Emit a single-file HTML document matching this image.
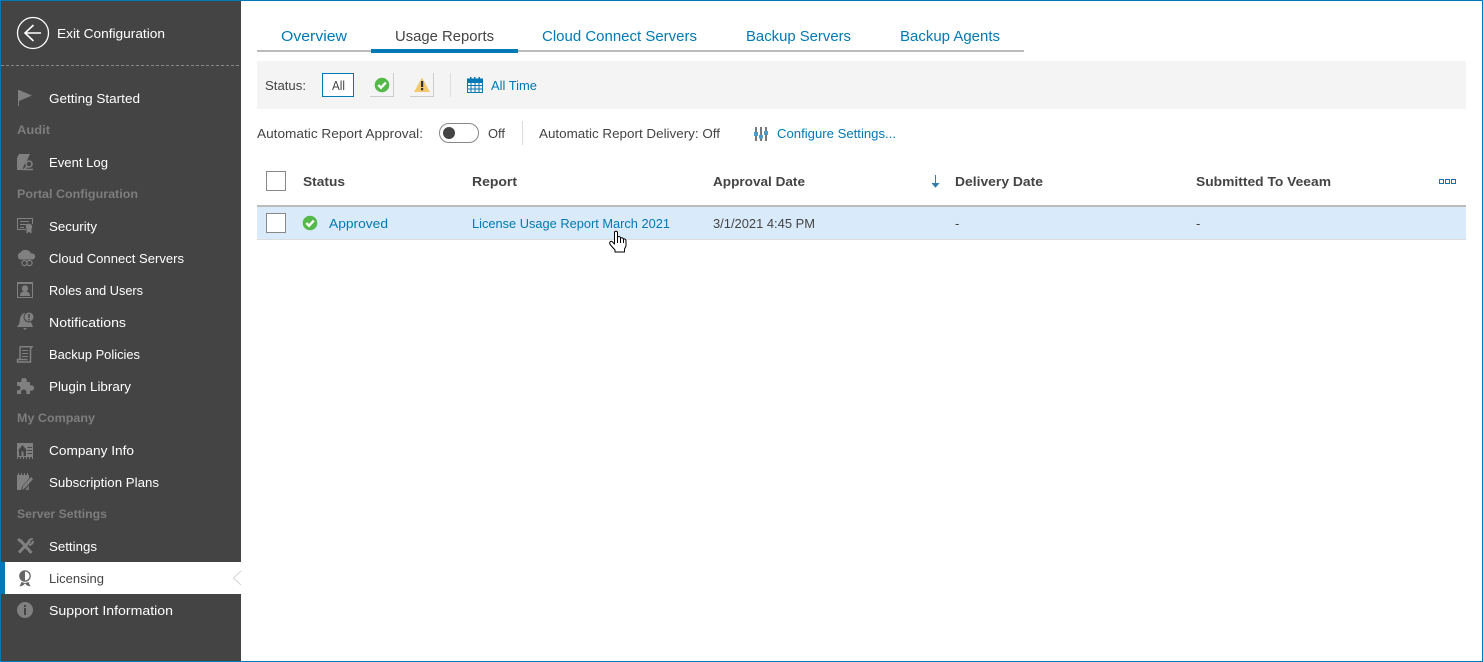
<!DOCTYPE html>
<html><head><meta charset="utf-8"><title>Usage Reports</title>
<style>
html,body{margin:0;padding:0;background:#fff;width:1483px;height:662px;overflow:hidden}
svg{display:block;position:absolute;left:0;top:0}
text{font-family:"Liberation Sans",sans-serif;font-size:13px;fill:#444}
.n{fill:#fff}
.h{font-weight:bold;font-size:12px;fill:#7d7d7d}
.t{font-size:15px;fill:#0079b4}
.l{fill:#0079b4}
.b{font-weight:bold;fill:#444}
.i{fill:#808080}
</style></head><body>
<svg width="1483" height="662" viewBox="0 0 1483 662">
<rect width="1483" height="662" fill="#fff"/>
<!-- sidebar -->
<rect x="1" y="1" width="240" height="660" fill="#444"/>
<line x1="1" y1="65.5" x2="241" y2="65.5" stroke="#8a8a8a" stroke-dasharray="3 2"/>
<rect x="1" y="562" width="4" height="32" fill="#0079b4"/>
<rect x="5" y="562" width="236" height="32" fill="#fff"/>
<path d="M241 571L233.500 578L241 585" fill="none" stroke="#d4d4d4"/>
<!-- frame -->
<rect x="0.500" y="0.500" width="1482" height="661" fill="none" stroke="#0079b4"/>
<!-- exit -->
<circle cx="33" cy="33" r="15.500" fill="none" stroke="#fff" stroke-width="1.300"/>
<path d="M41 33H25M33.500 25L25 33L33.500 41" fill="none" stroke="#fff" stroke-width="1.600"/>
<text class="n" x="57" y="38" textLength="108" lengthAdjust="spacingAndGlyphs">Exit Configuration</text>
<!-- nav text -->
<text class="n" x="49" y="103" textLength="91" lengthAdjust="spacingAndGlyphs">Getting Started</text>
<text class="h" x="17" y="134" textLength="33" lengthAdjust="spacingAndGlyphs">Audit</text>
<text class="n" x="49" y="167" textLength="59" lengthAdjust="spacingAndGlyphs">Event Log</text>
<text class="h" x="17" y="198" textLength="121" lengthAdjust="spacingAndGlyphs">Portal Configuration</text>
<text class="n" x="49" y="231" textLength="48" lengthAdjust="spacingAndGlyphs">Security</text>
<text class="n" x="49" y="263" textLength="135" lengthAdjust="spacingAndGlyphs">Cloud Connect Servers</text>
<text class="n" x="49" y="295" textLength="94" lengthAdjust="spacingAndGlyphs">Roles and Users</text>
<text class="n" x="49" y="327" textLength="77" lengthAdjust="spacingAndGlyphs">Notifications</text>
<text class="n" x="49" y="359" textLength="91" lengthAdjust="spacingAndGlyphs">Backup Policies</text>
<text class="n" x="49" y="391" textLength="82" lengthAdjust="spacingAndGlyphs">Plugin Library</text>
<text class="h" x="17" y="422" textLength="78" lengthAdjust="spacingAndGlyphs">My Company</text>
<text class="n" x="49" y="455" textLength="85" lengthAdjust="spacingAndGlyphs">Company Info</text>
<text class="n" x="49" y="487" textLength="110" lengthAdjust="spacingAndGlyphs">Subscription Plans</text>
<text class="h" x="17" y="518" textLength="90" lengthAdjust="spacingAndGlyphs">Server Settings</text>
<text class="n" x="49" y="551" textLength="48" lengthAdjust="spacingAndGlyphs">Settings</text>
<text x="49" y="583" textLength="55" lengthAdjust="spacingAndGlyphs">Licensing</text>
<text class="n" x="49" y="615" textLength="124" lengthAdjust="spacingAndGlyphs">Support Information</text>
<!-- nav icons -->
<path class="i" d="M18 90H19V106H18ZM19 90L32 95.500L19 101Z"/>
<!-- event log -->
<path class="i" d="M19 154H30L27.500 159.500L24 165L22.500 170H17V158Z"/>
<circle cx="29" cy="164" r="3" fill="none" stroke="#808080" stroke-width="1.600"/>
<path d="M27 166.500L24 169.500H33" fill="none" stroke="#808080" stroke-width="1.600"/>
<!-- security -->
<path d="M26 229.500H17.500V218.500H32.500V224" fill="none" stroke="#808080"/>
<path class="i" d="M20 221H29V222H20ZM20 224H27V225H20ZM20 227H24V228H20Z"/>
<circle class="i" cx="29" cy="227" r="3.200"/><path class="i" d="M26.500 229H31.500V233.500L29 232L26.500 233.500Z"/>
<!-- cloud -->
<path class="i" d="M20 259.500A3.800 3.800 0 0 1 20.500 252.500A6 6 0 0 1 31 253.500A3 3 0 0 1 33 259.500Z"/>
<circle cx="24.500" cy="263" r="2.600" fill="none" stroke="#808080" stroke-width="1.200"/>
<circle cx="29.500" cy="263" r="2.600" fill="none" stroke="#808080" stroke-width="1.200"/>
<!-- roles -->
<rect x="17.500" y="282.500" width="15" height="15" fill="none" stroke="#808080"/>
<rect class="i" x="17" y="282" width="16" height="2"/>
<circle class="i" cx="25" cy="288.500" r="3.200"/><path class="i" d="M20 296C20 292.500 22 291.500 25 291.500C28 291.500 30 292.500 30 296Z"/>
<!-- notifications -->
<path class="i" d="M24 313A6 6 0 0 1 27 313A7 7 0 0 0 31 322L33 327H17L19.500 323C20 319 20 315 24 313Z"/>
<path class="i" d="M23 328H27L25 330Z"/>
<circle cx="29" cy="317" r="5" fill="#808080" stroke="#444"/><path d="M29 314V318M29 319V320.500" stroke="#444" stroke-width="1.500"/>
<!-- policies -->
<path d="M20 346.800H32L30.500 349V362H17.500V359.500H27.500M20 346.800V359.500" fill="none" stroke="#808080" stroke-width="1.500"/>
<path d="M22 350.500H28M22 353.500H28M22 356.500H28" stroke="#808080"/>
<!-- plugin -->
<path class="i" d="M17 382H21.500A2.800 2.800 0 1 1 26.500 382H30V385.500A2.800 2.800 0 1 1 30 390.500V394H26A2.800 2.800 0 1 0 21.500 394H17V390A2.300 2.300 0 1 0 17 386Z"/>
<!-- company -->
<rect class="i" x="17" y="443" width="16" height="14"/>
<path fill="#444" d="M18 450.500L22.500 445L27 450.500H26V456H19V450.500ZM27.500 447H32V448H27.500ZM27.500 450H32V451H27.500ZM27.500 453H32V454H27.500Z"/>
<path class="i" d="M21.500 451.500H23.500V456H21.500Z"/>
<path fill="#808080" d="M17 457H18V459H17ZM20 457H21V459H20ZM23 457H24V459H23ZM26 457H27V459H26ZM29 457H30V459H29ZM32 457H33V459H32Z"/>
<!-- subscription -->
<path class="i" d="M17 475H29V478.500L22 486.500L21 490H17Z"/>
<path fill="#808080" d="M18 473H19V475H18ZM21 473H22V475H21ZM24 473H25V475H24ZM27 473H28V475H27Z"/>
<path class="i" d="M31 477L33 479L25 488L22 490L23 486Z"/>
<path class="i" d="M25 490H29V485Z" opacity=".8"/>
<!-- settings -->
<path d="M20 540L31.500 553" stroke="#808080" stroke-width="3"/>
<path class="i" d="M17 540L19 538L22 541L20.500 543Z"/>
<path d="M30 541L19 552.500" stroke="#808080" stroke-width="3"/>
<path d="M28.500 544A4 4 0 0 1 32.800 539M29 545A4 4 0 0 0 33 541" fill="none" stroke="#808080" stroke-width="2"/>
<!-- licensing -->
<circle cx="25" cy="576" r="5.800" fill="#666"/>
<path d="M25 571.500A4.500 4.500 0 0 1 25 580.500Z" fill="#fff"/>
<path d="M21.500 582L19.500 586.500L23 585.500L25 583.500L27 585.500L30.500 586.500L28.500 582L25 583Z" fill="#666"/>
<!-- info -->
<circle class="i" cx="25" cy="610" r="8"/>
<path d="M24 608H26V615H24ZM24 605H26V607H24Z" fill="#444"/>
<!-- tabs -->
<rect x="257" y="50" width="767" height="2" fill="#bbb"/>
<rect x="371" y="49" width="147" height="4" fill="#0079b4"/>
<text class="t" x="281" y="41" textLength="66" lengthAdjust="spacingAndGlyphs">Overview</text>
<text class="t" style="fill:#444" x="395" y="41" textLength="99" lengthAdjust="spacingAndGlyphs">Usage Reports</text>
<text class="t" x="542" y="41" textLength="155" lengthAdjust="spacingAndGlyphs">Cloud Connect Servers</text>
<text class="t" x="746" y="41" textLength="105" lengthAdjust="spacingAndGlyphs">Backup Servers</text>
<text class="t" x="900" y="41" textLength="100" lengthAdjust="spacingAndGlyphs">Backup Agents</text>
<!-- toolbar -->
<rect x="257" y="61" width="1209" height="48" fill="#f4f4f4"/>
<text x="265" y="90" textLength="41" lengthAdjust="spacingAndGlyphs">Status:</text>
<rect x="322.500" y="73.500" width="31" height="23" fill="#fff" stroke="#0079b4"/>
<text x="332" y="90" textLength="13" lengthAdjust="spacingAndGlyphs">All</text>
<path d="M370 96.500H393.500V73" fill="none" stroke="#ccc"/>
<circle cx="382" cy="85" r="7.300" fill="#54b948"/>
<path d="M378.300 85L381 87.800L385.800 82.600" fill="none" stroke="#fff" stroke-width="2.400"/>
<path d="M410 96.500H433.500V73" fill="none" stroke="#ccc"/>
<path d="M422 77.500L430 92H414Z" fill="#f2c96f"/>
<path d="M421 81H423.200V87H421ZM421 88H423.200V90.200H421Z" fill="#333"/>
<rect x="450" y="73" width="1" height="24" fill="#ddd"/>
<path fill="#0079b4" fill-rule="evenodd" d="M470 77H471.500V78.500H474V77H475.500V78.500H478.500V77H480V78.500H483V93H467V78.500H470ZM468 83V85H470.500V83ZM471.500 83V85H474.500V83ZM475.500 83V85H478.500V83ZM479.500 83V85H482V83ZM468 86V88.500H470.500V86ZM471.500 86V88.500H474.500V86ZM475.500 86V88.500H478.500V86ZM479.500 86V88.500H482V86ZM468 89.500V92H470.500V89.500ZM471.500 89.500V92H474.500V89.500ZM475.500 89.500V92H478.500V89.500ZM479.500 89.500V92H482V89.500Z"/>
<text class="l" x="491" y="90" textLength="46" lengthAdjust="spacingAndGlyphs">All Time</text>
<!-- row 2 -->
<text x="257" y="138" textLength="166" lengthAdjust="spacingAndGlyphs">Automatic Report Approval:</text>
<rect x="439.500" y="123.500" width="39" height="19" rx="9.500" fill="#fff" stroke="#888"/>
<circle cx="449" cy="133" r="6" fill="#444"/>
<text x="488" y="138" textLength="17" lengthAdjust="spacingAndGlyphs">Off</text>
<rect x="522" y="121" width="1" height="24" fill="#ddd"/>
<text x="539" y="138" textLength="181" lengthAdjust="spacingAndGlyphs">Automatic Report Delivery: Off</text>
<path d="M755 127H757V141H755ZM760 127H762V141H760ZM765 127H767V141H765Z" fill="#777"/>
<path d="M754 132H758V136H754ZM759 135H763V138.500H759ZM764 131H768V135H764Z" fill="#4a9ccb"/>
<text class="l" x="777" y="138" textLength="119" lengthAdjust="spacingAndGlyphs">Configure Settings...</text>
<!-- table header -->
<rect x="266.500" y="171.500" width="19" height="19" fill="#fff" stroke="#888"/>
<text class="b" x="303" y="186" textLength="42" lengthAdjust="spacingAndGlyphs">Status</text>
<text class="b" x="472" y="186" textLength="45" lengthAdjust="spacingAndGlyphs">Report</text>
<text class="b" x="713" y="186" textLength="92" lengthAdjust="spacingAndGlyphs">Approval Date</text>
<path d="M935.500 175V186M932.500 183.500L935.500 187L938.500 183.500Z" fill="#2d7fae" stroke="#2d7fae"/>
<text class="b" x="955" y="186" textLength="88" lengthAdjust="spacingAndGlyphs">Delivery Date</text>
<text class="b" x="1196" y="186" textLength="135" lengthAdjust="spacingAndGlyphs">Submitted To Veeam</text>
<path d="M1439.500 179.500h4v4h-4zM1445.500 179.500h4v4h-4zM1451.500 179.500h4v4h-4z" fill="none" stroke="#0079b4"/>
<rect x="257" y="205" width="1209" height="2" fill="#bbb"/>
<!-- row -->
<rect x="257" y="207" width="1209" height="32" fill="#d9ebfb"/>
<rect x="257" y="239" width="1209" height="1" fill="#ddd"/>
<rect x="266.500" y="213.500" width="19" height="19" fill="#fff" stroke="#888"/>
<circle cx="310" cy="223" r="7.300" fill="#54b948"/>
<path d="M306.300 223L309 225.800L313.800 220.600" fill="none" stroke="#fff" stroke-width="2.400"/>
<text class="l" x="329" y="228" textLength="59" lengthAdjust="spacingAndGlyphs">Approved</text>
<text class="l" x="472" y="228" textLength="198" lengthAdjust="spacingAndGlyphs">License Usage Report March 2021</text>
<text x="713" y="228" textLength="102" lengthAdjust="spacingAndGlyphs">3/1/2021 4:45 PM</text>
<text x="955" y="228">-</text>
<text x="1196" y="228">-</text>
<!-- cursor -->
<path d="M614.500 232.500C614.500 230.800 617.500 230.800 617.500 232.500V237C619 236 620.500 236.500 620.500 238C622 237.500 623 238 623.500 239C625 238.500 626 239.500 626 241V246L624.500 249V252H615V250L610.500 245C609 243 609.800 240.500 612 241.500L614.500 244Z" fill="#fff" stroke="#000" stroke-linejoin="round"/>
<path d="M617.500 237V243M620.500 238V243M623.500 239V243" stroke="#000"/>
</svg>
</body></html>
